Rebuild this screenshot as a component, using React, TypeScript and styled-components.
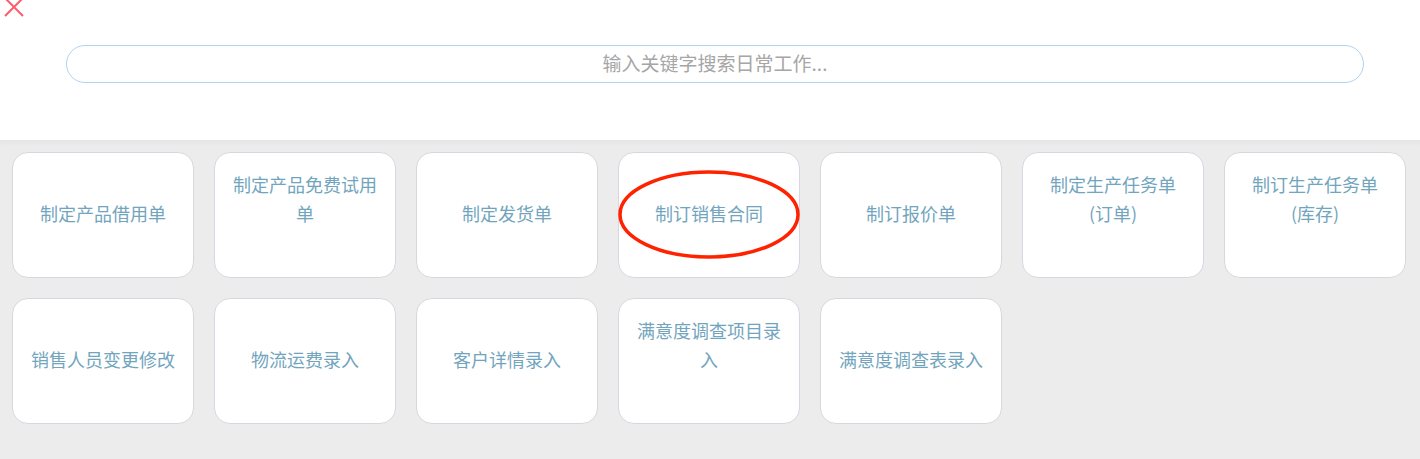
import styled, { createGlobalStyle } from 'styled-components';

const GlobalStyle = createGlobalStyle`
  html, body {
    margin: 0;
    padding: 0;
    background: #ececec;
    font-family: "Noto Sans CJK SC", "Noto Sans", sans-serif;
  }
`;

const Page = styled.div`
  width: 1420px;
  min-height: 459px;
  background: #ececec;
  position: relative;
`;

const Header = styled.div`
  position: relative;
  height: 140px;
  box-sizing: border-box;
  background: #fff;
  padding: 45px 56px 0 66px;
`;

const CloseButton = styled.button`
  position: absolute;
  left: 3px;
  top: -3px;
  width: 22px;
  height: 20px;
  padding: 0;
  border: none;
  background: none;
  cursor: pointer;
`;

const SearchInput = styled.input`
  display: block;
  width: 100%;
  height: 38px;
  box-sizing: border-box;
  border: 1px solid #b3d3f0;
  border-radius: 19px;
  background: #fff;
  text-align: center;
  font-family: inherit;
  font-size: 19px;
  padding: 0 0 3px;
  color: #555;
  outline: none;

  &::placeholder {
    color: #a6a6a6;
  }
`;

const Body = styled.div`
  position: relative;
  padding: 12px 14px 20px 12px;
  box-shadow: inset 0 6px 6px -4px rgba(0, 0, 0, 0.04);
`;

const Grid = styled.div`
  display: grid;
  grid-template-columns: repeat(7, 182px);
  grid-auto-rows: 126px;
  gap: 20px;
`;

const Card = styled.div<{ $wrap?: boolean }>`
  box-sizing: border-box;
  background: #fff;
  border: 1px solid #dad6e1;
  border-radius: 16px;
  display: flex;
  align-items: center;
  justify-content: center;
  padding: 0 16px ${(p) => (p.$wrap ? '33px' : '4px')};
  text-align: center;
  color: #72a5bd;
  font-size: 18px;
  line-height: 29px;
  cursor: pointer;
`;

const Annotation = styled.svg`
  position: absolute;
  left: 614px;
  top: 27px;
  pointer-events: none;
`;

const items: { label: string; wrap?: boolean }[] = [
  { label: '制定产品借用单' },
  { label: '制定产品免费试用单', wrap: true },
  { label: '制定发货单' },
  { label: '制订销售合同' },
  { label: '制订报价单' },
  { label: '制定生产任务单(订单)', wrap: true },
  { label: '制订生产任务单(库存)', wrap: true },
  { label: '销售人员变更修改' },
  { label: '物流运费录入' },
  { label: '客户详情录入' },
  { label: '满意度调查项目录入', wrap: true },
  { label: '满意度调查表录入' },
];

const App = () => {
  return (
    <Page>
      <GlobalStyle />
      <Header>
        <CloseButton aria-label="关闭">
          <svg width="22" height="20" viewBox="0 0 22 20">
            <path d="M2 1 L20 19 M20 1 L2 19" stroke="#ff5b6b" strokeWidth="2" fill="none" />
          </svg>
        </CloseButton>
        <SearchInput placeholder="输入关键字搜索日常工作..." />
      </Header>
      <Body>
        <Grid>
          {items.map((it) => (
            <Card key={it.label} $wrap={it.wrap}>
              {it.label}
            </Card>
          ))}
        </Grid>
        <Annotation width="190" height="95" viewBox="0 0 190 95">
          <ellipse cx="95" cy="47.5" rx="89" ry="42.5" stroke="#ff2200" strokeWidth="3.5" fill="none" />
        </Annotation>
      </Body>
    </Page>
  );
};

export default App;
